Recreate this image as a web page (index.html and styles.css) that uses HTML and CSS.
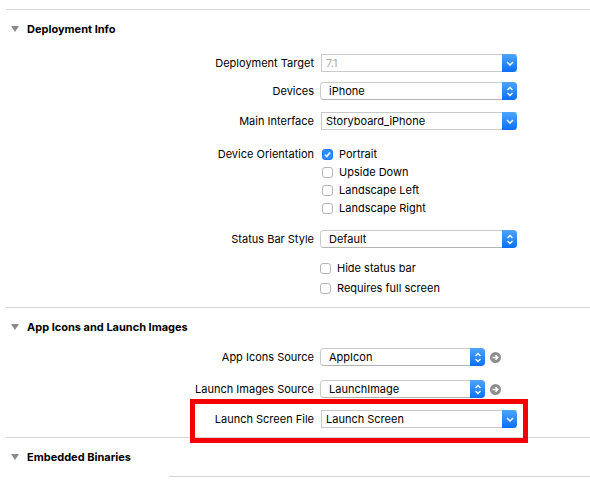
FILE: index.html
```html
<!DOCTYPE html>
<html>
<head>
    <link rel="stylesheet" href="styles.css">
</head>
<body>
    <div class="pane">
        <section class="section">
            <div class="section-head"><span class="disclosure"></span>Deployment Info</div>
            <div class="form form-deploy">
                <div class="row row-first">
                    <span class="label">Deployment Target</span>
                    <div class="combo wide disabled">
                        <span class="value">7.1</span>
                        <span class="combo-btn">
                            <svg width="8" height="5" viewBox="0 0 8 5"><path d="M1 1 L4 4 L7 1" fill="none" stroke="#fff" stroke-width="1.5"/></svg>
                        </span>
                    </div>
                </div>
                <div class="row">
                    <span class="label">Devices</span>
                    <div class="popup wide">
                        <span class="value">iPhone</span>
                        <span class="popup-btn">
                            <svg width="8" height="11" viewBox="0 0 8 11"><path d="M1.5 4 L4 1.5 L6.5 4 M1.5 7 L4 9.5 L6.5 7" fill="none" stroke="#fff" stroke-width="1.3"/></svg>
                        </span>
                    </div>
                </div>
                <div class="row row-mi">
                    <span class="label">Main Interface</span>
                    <div class="combo wide">
                        <span class="value">Storyboard_iPhone</span>
                        <span class="combo-btn">
                            <svg width="8" height="5" viewBox="0 0 8 5"><path d="M1 1 L4 4 L7 1" fill="none" stroke="#fff" stroke-width="1.5"/></svg>
                        </span>
                    </div>
                </div>
                <div class="row-group">
                    <span class="label">Device Orientation</span>
                    <div class="checks">
                        <div class="check"><span class="box checked"><svg width="9" height="9" viewBox="0 0 9 9"><path d="M2 4.8 L3.8 6.6 L7 2.4" fill="none" stroke="#fff" stroke-width="1.6"/></svg></span>Portrait</div>
                        <div class="check"><span class="box"></span>Upside Down</div>
                        <div class="check"><span class="box"></span>Landscape Left</div>
                        <div class="check"><span class="box"></span>Landscape Right</div>
                    </div>
                </div>
                <div class="row row-sbs">
                    <span class="label">Status Bar Style</span>
                    <div class="popup wide">
                        <span class="value">Default</span>
                        <span class="popup-btn">
                            <svg width="8" height="11" viewBox="0 0 8 11"><path d="M1.5 4 L4 1.5 L6.5 4 M1.5 7 L4 9.5 L6.5 7" fill="none" stroke="#fff" stroke-width="1.3"/></svg>
                        </span>
                    </div>
                </div>
                <div class="row row-hide">
                    <span class="label"></span>
                    <div class="check flat"><span class="box"></span>Hide status bar</div>
                </div>
                <div class="row row-full">
                    <span class="label"></span>
                    <div class="check flat"><span class="box"></span>Requires full screen</div>
                </div>
            </div>
        </section>

        <section class="section">
            <div class="section-head"><span class="disclosure"></span>App Icons and Launch Images</div>
            <div class="form form-icons">
                <div class="row row-ais">
                    <span class="label">App Icons Source</span>
                    <div class="popup short">
                        <span class="value">AppIcon</span>
                        <span class="popup-btn">
                            <svg width="8" height="11" viewBox="0 0 8 11"><path d="M1.5 4 L4 1.5 L6.5 4 M1.5 7 L4 9.5 L6.5 7" fill="none" stroke="#fff" stroke-width="1.3"/></svg>
                        </span>
                    </div>
                    <span class="go"><svg width="11" height="11" viewBox="0 0 11 11"><circle cx="5.5" cy="5.5" r="5.5" fill="#8e8e8e"/><path d="M2.5 5.5 H7.5 M5.5 3.2 L7.8 5.5 L5.5 7.8" fill="none" stroke="#fff" stroke-width="1.5"/></svg></span>
                </div>
                <div class="row row-lis">
                    <span class="label">Launch Images Source</span>
                    <div class="popup short">
                        <span class="value">LaunchImage</span>
                        <span class="popup-btn">
                            <svg width="8" height="11" viewBox="0 0 8 11"><path d="M1.5 4 L4 1.5 L6.5 4 M1.5 7 L4 9.5 L6.5 7" fill="none" stroke="#fff" stroke-width="1.3"/></svg>
                        </span>
                    </div>
                    <span class="go"><svg width="11" height="11" viewBox="0 0 11 11"><circle cx="5.5" cy="5.5" r="5.5" fill="#8e8e8e"/><path d="M2.5 5.5 H7.5 M5.5 3.2 L7.8 5.5 L5.5 7.8" fill="none" stroke="#fff" stroke-width="1.5"/></svg></span>
                </div>
                <div class="row row-lsf">
                    <span class="label">Launch Screen File</span>
                    <div class="combo wide">
                        <span class="value">Launch Screen</span>
                        <span class="combo-btn">
                            <svg width="8" height="5" viewBox="0 0 8 5"><path d="M1 1 L4 4 L7 1" fill="none" stroke="#fff" stroke-width="1.5"/></svg>
                        </span>
                    </div>
                </div>
            </div>
        </section>

        <section class="section">
            <div class="section-head"><span class="disclosure"></span>Embedded Binaries</div>
            <div class="list-line"></div>
        </section>
    </div>

    <div class="highlight"></div>
</body>
</html>
```

FILE: styles.css
```css
body {
    margin: 0;
    background: #fff;
    font-family: Inter, "Liberation Sans", sans-serif;
    font-size: 11px;
    color: #000;
}

.pane {
    padding-top: 9px;
}

.section {
    margin-left: 6px;
    border-top: 1px solid #d6d6d6;
}

.section-head {
    height: 38px;
    display: flex;
    align-items: center;
    padding-left: 5px;
    font-weight: 700;
}

.disclosure {
    width: 0;
    height: 0;
    border-left: 4px solid transparent;
    border-right: 4px solid transparent;
    border-top: 6px solid #8a8a8a;
    margin-right: 8px;
}

.form-deploy {
    padding-bottom: 10px;
}

.form-icons {
    padding-bottom: 9px;
}

.row {
    display: flex;
    align-items: center;
    height: 18px;
    margin-top: 10px;
}

.row-first { margin-top: 6px; }
.row-mi { margin-top: 12px; }
.row-sbs { margin-top: 13px; }
.row-hide { margin-top: 11px; }
.row-full { margin-top: 2px; }
.row-ais { margin-top: 2px; }
.row-lis { margin-top: 14px; }
.row-lsf { margin-top: 12px; }

.label {
    width: 308px;
    flex: none;
    text-align: right;
    line-height: 18px;
    margin-right: 6px;
}

.row-group {
    display: flex;
    align-items: flex-start;
    margin-top: 15px;
}

.checks {
    display: flex;
    flex-direction: column;
    padding-left: 2px;
}

.check {
    display: flex;
    align-items: center;
    height: 18px;
}

.box {
    width: 11px;
    height: 11px;
    box-sizing: border-box;
    border: 1px solid #b5b5b5;
    border-radius: 3px;
    background: #fff;
    margin-right: 6px;
    display: flex;
    align-items: center;
    justify-content: center;
}

.box.checked {
    border-color: #1b7cf5;
    background: #2f8cfb;
}

.combo,
.popup {
    position: relative;
    height: 18px;
    box-sizing: border-box;
    display: flex;
    align-items: center;
    background: #fff;
}

.wide { width: 197px; }
.short { width: 165px; }

.combo {
    margin-left: 1px;
    width: 196px;
    border: 1px solid #c9c9c9;
    border-right: none;
    padding-left: 4px;
}

.popup {
    border: 1px solid #cbcbcb;
    border-bottom-color: #b4b4b4;
    border-radius: 4px;
    padding-left: 8px;
}

.disabled .value {
    color: #ababab;
}

.combo-btn,
.popup-btn {
    position: absolute;
    top: -1px;
    right: 0;
    width: 15px;
    height: 18px;
    border-radius: 0 4px 4px 0;
    background: linear-gradient(#4ea5ff, #0b6ff6);
    display: flex;
    align-items: center;
    justify-content: center;
}

.popup-btn {
    right: -1px;
}

.go {
    display: flex;
    margin-left: 5px;
}

.list-line {
    margin-left: 163px;
    border-top: 1px solid #d6d6d6;
    height: 20px;
}

.highlight {
    position: absolute;
    left: 190px;
    top: 399px;
    width: 338px;
    height: 44px;
    box-sizing: border-box;
    border: 5px solid #f50000;
}
```
